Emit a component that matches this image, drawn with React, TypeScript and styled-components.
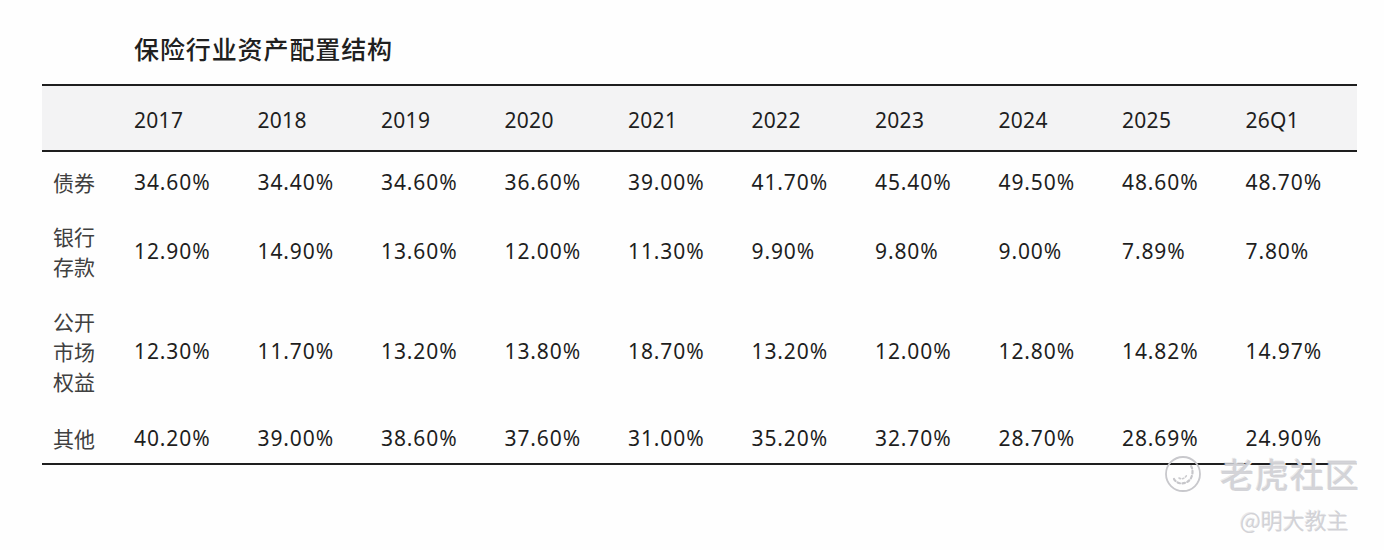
import React from "react";
import styled, { createGlobalStyle } from "styled-components";

const Global = createGlobalStyle`
  html, body { margin: 0; padding: 0; background: #ffffff; }
  body { width: 1384px; height: 550px; overflow: hidden; }
`;

const Page = styled.div`
  position: relative;
  width: 1384px;
  height: 550px;
  background: #fefefe;
  font-family: "Noto Sans", "Noto Sans CJK SC", sans-serif;
  color: #1c1c1c;
`;

const Title = styled.h1`
  margin: 0;
  padding: 34px 0 0 134px;
  font-family: "Noto Sans CJK SC", sans-serif;
  font-size: 25px;
  line-height: 28px;
  font-weight: 500;
  color: #202020;
  letter-spacing: 0.9px;
`;

const Table = styled.div`
  margin: 22px 0 0 42px;
  width: 1315px;
  border-top: 2px solid #1e1e1e;
  border-bottom: 2px solid #1e1e1e;
`;

const Row = styled.div<{ $h: number; $head?: boolean }>`
  display: grid;
  grid-template-columns: 92px repeat(9, 123.5px) 1fr;
  align-items: center;
  height: ${(p) => p.$h}px;
  background: ${(p) => (p.$head ? "#f3f3f4" : "transparent")};
  border-bottom: ${(p) => (p.$head ? "2px solid #1e1e1e" : "none")};
  padding-top: ${(p) => (p.$head ? 3 : 0)}px;
  box-sizing: border-box;
`;

const Label = styled.div`
  padding-left: 11px;
  font-family: "Noto Sans CJK SC", sans-serif;
  font-size: 21px;
  line-height: 30px;
  color: #404040;
  width: 48px;
  word-break: break-all;
`;

const Cell = styled.div<{ $head?: boolean }>`
  font-family: "Noto Sans", "Noto Sans CJK SC", sans-serif;
  font-size: 21px;
  letter-spacing: ${(p) => (p.$head ? 0.3 : 0.9)}px;
  color: #1e1e1e;
  white-space: nowrap;
`;

const Watermark = styled.div`
  position: absolute;
  left: 1164px;
  top: 455px;
  display: flex;
  align-items: center;
  gap: 18px;
`;

const MarkText = styled.span`
  font-family: "Noto Sans CJK SC", sans-serif;
  font-size: 34px;
  line-height: 36px;
  font-weight: 500;
  color: rgba(205, 205, 210, 0.85);
  text-shadow: 1px 1px 0 rgba(255, 255, 255, 0.9), -1px -1px 0 rgba(150, 150, 155, 0.2);
  letter-spacing: 1px;
`;

const Author = styled.div`
  position: absolute;
  left: 1240px;
  top: 504px;
  font-family: "Noto Sans CJK SC", sans-serif;
  font-size: 22px;
  line-height: 30px;
  color: rgba(205, 205, 210, 0.9);
  text-shadow: 1px 1px 0 rgba(255, 255, 255, 0.9), -1px -1px 0 rgba(150, 150, 155, 0.2);
`;

const years = ["2017", "2018", "2019", "2020", "2021", "2022", "2023", "2024", "2025", "26Q1"];

const rows: { label: string; h: number; values: string[] }[] = [
  { label: "债券", h: 60, values: ["34.60%", "34.40%", "34.60%", "36.60%", "39.00%", "41.70%", "45.40%", "49.50%", "48.60%", "48.70%"] },
  { label: "银行存款", h: 78, values: ["12.90%", "14.90%", "13.60%", "12.00%", "11.30%", "9.90%", "9.80%", "9.00%", "7.89%", "7.80%"] },
  { label: "公开市场权益", h: 122, values: ["12.30%", "11.70%", "13.20%", "13.80%", "18.70%", "13.20%", "12.00%", "12.80%", "14.82%", "14.97%"] },
  { label: "其他", h: 51, values: ["40.20%", "39.00%", "38.60%", "37.60%", "31.00%", "35.20%", "32.70%", "28.70%", "28.69%", "24.90%"] },
];

const TigerLogo = () => (
  <svg width="38" height="38" viewBox="0 0 38 38" fill="none">
    <circle cx="19" cy="19" r="17" stroke="#c8c8cc" strokeWidth="1.8" />
    <path d="M10 24 C 13 30, 23 30, 27 23 C 29 19, 29 14, 27 11" stroke="#c6c6ca" strokeWidth="2.2" strokeDasharray="2.5 2.5" strokeLinecap="round" />
    <path d="M15 23 C 18 25, 22 23, 23 19" stroke="#cccccf" strokeWidth="1.6" strokeDasharray="1.5 2" strokeLinecap="round" />
  </svg>
);

export default function App() {
  return (
    <Page>
      <Global />
      <Title>保险行业资产配置结构</Title>
      <Table>
        <Row $h={66} $head>
          <span />
          {years.map((y) => (
            <Cell key={y} $head>{y}</Cell>
          ))}
        </Row>
        {rows.map((r) => (
          <Row key={r.label} $h={r.h}>
            <Label>{r.label}</Label>
            {r.values.map((v, i) => (
              <Cell key={i}>{v}</Cell>
            ))}
          </Row>
        ))}
      </Table>
      <Watermark>
        <TigerLogo />
        <MarkText>老虎社区</MarkText>
      </Watermark>
      <Author>@明大教主</Author>
    </Page>
  );
}
